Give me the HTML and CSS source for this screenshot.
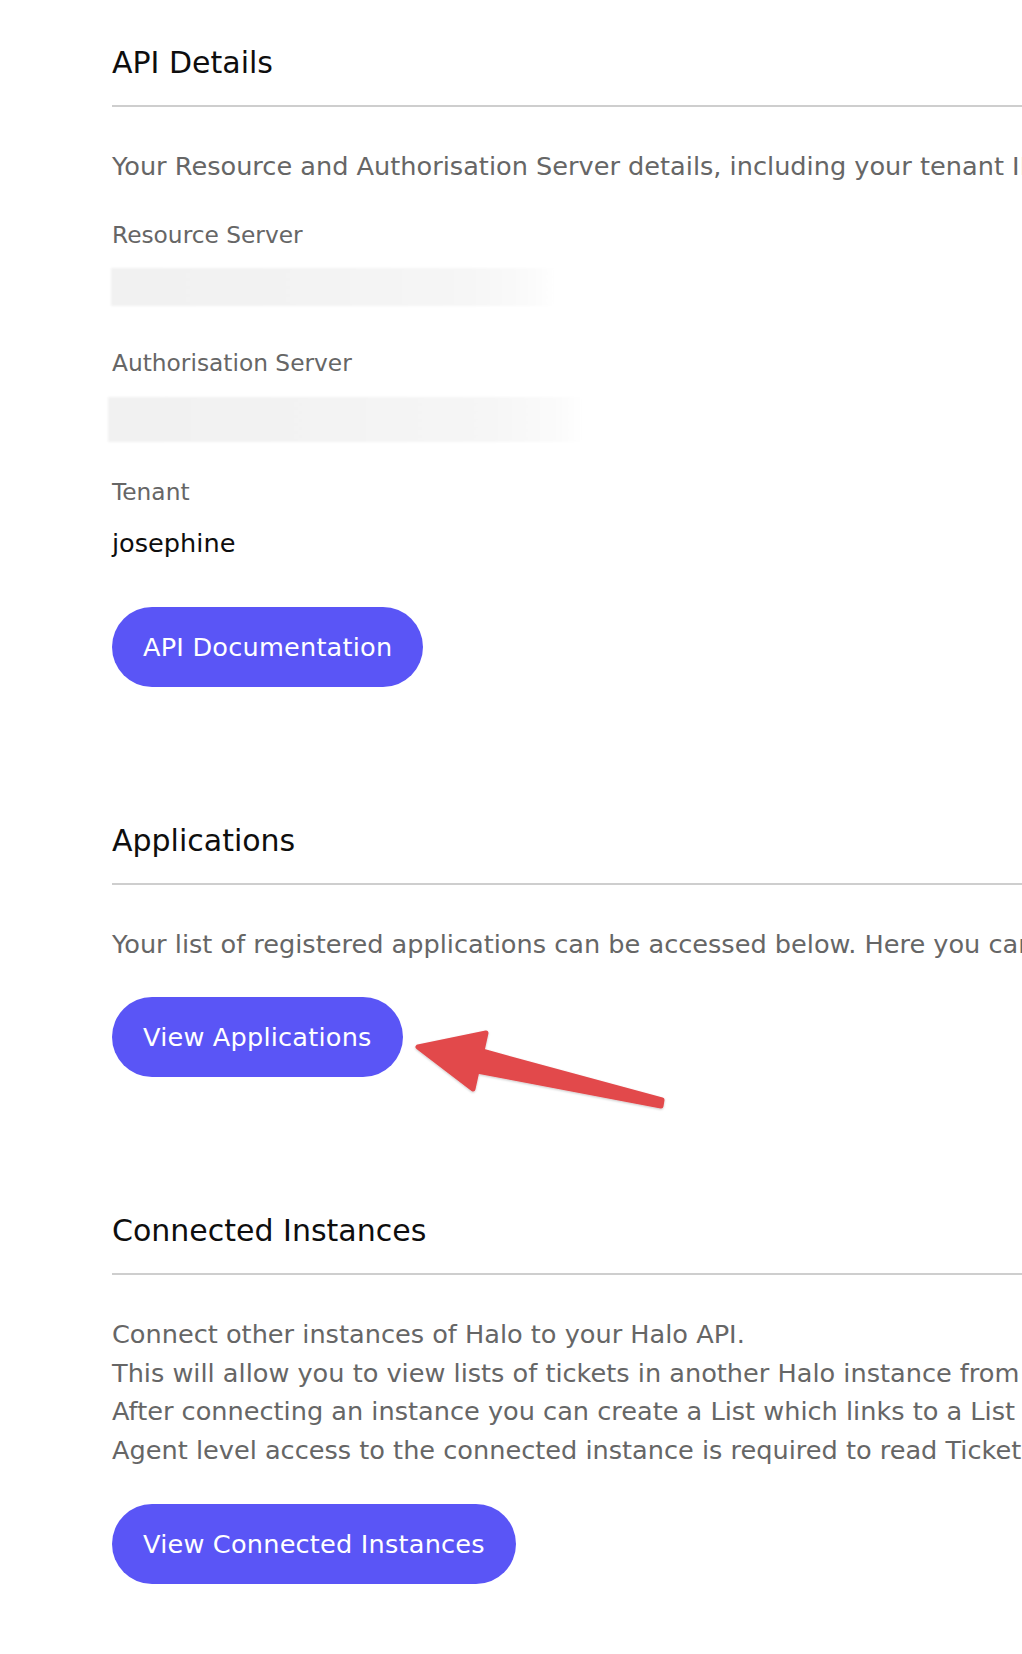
FILE: index.html
```html
<!DOCTYPE html>
<html lang="en">
<head>
<meta charset="utf-8">
<title>API Details</title>
<link rel="stylesheet" href="styles.css">
</head>
<body>
<div class="page">
  <section class="section section-first">
    <h2 class="section-title">API Details</h2>
    <p class="desc">Your Resource and Authorisation Server details, including your tenant ID, can be found below.</p>

    <div class="field">
      <div class="label">Resource Server</div>
      <div class="redacted redacted-one"></div>
    </div>

    <div class="field field-after-box">
      <div class="label">Authorisation Server</div>
      <div class="redacted redacted-two"></div>
    </div>

    <div class="field">
      <div class="label">Tenant</div>
      <div class="value">josephine</div>
    </div>

    <a class="btn btn-docs" href="#">API Documentation</a>
  </section>

  <section class="section">
    <h2 class="section-title">Applications</h2>
    <p class="desc">Your list of registered applications can be accessed below. Here you can create and manage your applications.</p>
    <a class="btn btn-block" href="#">View Applications</a>
  </section>

  <section class="section">
    <h2 class="section-title">Connected Instances</h2>
    <p class="desc">Connect other instances of Halo to your Halo API.<br>
This will allow you to view lists of tickets in another Halo instance from your own instance.<br>
After connecting an instance you can create a List which links to a List in the connected instance.<br>
Agent level access to the connected instance is required to read Tickets.</p>
    <a class="btn btn-block btn-para" href="#">View Connected Instances</a>
  </section>

  <svg class="arrow" width="280" height="100" viewBox="0 0 280 100" aria-hidden="true">
    <defs>
      <filter id="arrowShadow" x="-10%" y="-20%" width="120%" height="150%">
        <feDropShadow dx="0" dy="1" stdDeviation="1.2" flood-color="#000" flood-opacity="0.22"/>
      </filter>
    </defs>
    <polygon points="18,27 86,13 82,31 262,80 261,86 77,51 73,69" fill="#e2494c" stroke="#e2494c" stroke-width="5" stroke-linejoin="round" filter="url(#arrowShadow)"/>
  </svg>
</div>
</body>
</html>
```

FILE: styles.css
```css
html, body {
  margin: 0;
  padding: 0;
  background: #ffffff;
}

body {
  font-family: "DejaVu Sans", "Open Sans", sans-serif;
  overflow: hidden;
  width: 1022px;
  height: 1654px;
}

.page {
  position: relative;
  width: 1700px;
  padding: 43px 0 0 112px;
  box-sizing: border-box;
}

.section + .section {
  margin-top: 134px;
}

.section-title {
  margin: 0;
  font-size: 30px;
  line-height: 40px;
  font-weight: normal;
  color: #0e0e0e;
  padding-bottom: 22px;
  border-bottom: 2px solid #cecece;
}

.desc {
  margin: 40px 0 0;
  font-size: 25.6px;
  line-height: 38.4px;
  color: #666666;
  white-space: nowrap;
}

.field {
  margin-top: 34px;
}

.field-after-box {
  margin-top: 41px;
}

.label {
  font-size: 23.3px;
  line-height: 32px;
  color: #666666;
  white-space: nowrap;
}

.value {
  margin-top: 16px;
  font-size: 25.6px;
  line-height: 38.4px;
  color: #0e0e0e;
}

.redacted {
  background: linear-gradient(90deg, #f1f1f1 0%, #f3f3f3 45%, #f6f6f6 80%, #fbfbfb 95%, #ffffff 100%);
  filter: blur(1px);
}

.redacted-one {
  margin: 17px 0 0 -1px;
  width: 444px;
  height: 38px;
}

.redacted-two {
  margin: 18px 0 0 -4px;
  width: 475px;
  height: 45px;
}

.btn {
  display: block;
  width: fit-content;
  height: 80px;
  padding: 0 31px;
  border-radius: 40px;
  background: #5a55f6;
  color: #ffffff;
  font-size: 25.6px;
  line-height: 80px;
  letter-spacing: 0.2px;
  text-decoration: none;
  white-space: nowrap;
}

.btn-docs {
  margin-top: 44.6px;
}

.btn-block {
  margin-top: 33.6px;
}

.btn-para {
  margin-top: 35.4px;
}

.arrow {
  position: absolute;
  left: 400px;
  top: 1020px;
  overflow: visible;
}
```
